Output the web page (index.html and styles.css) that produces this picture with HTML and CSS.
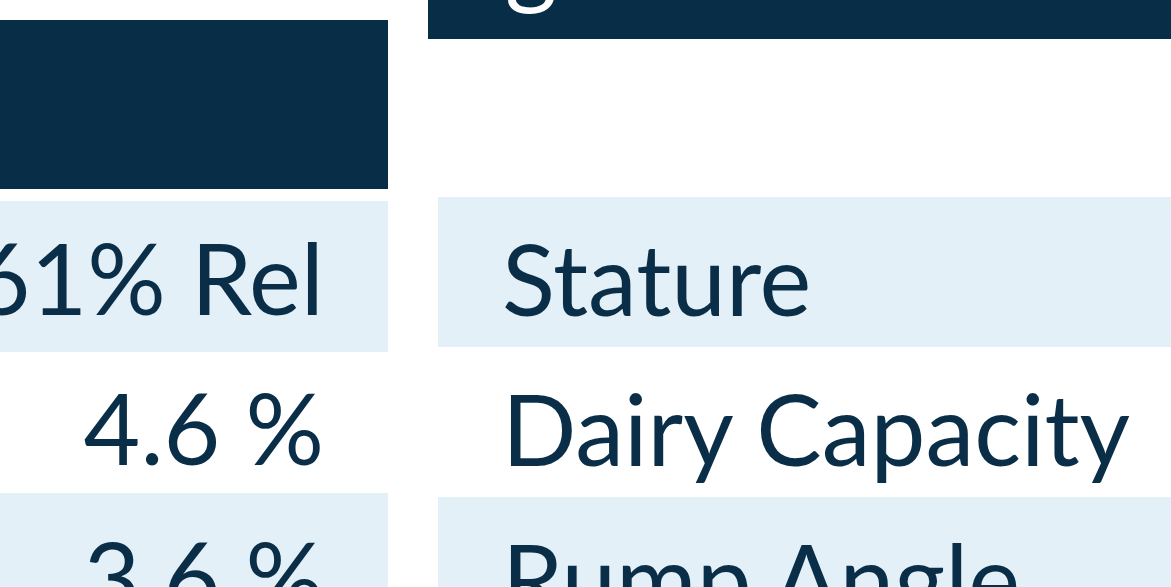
FILE: index.html
```html
<!DOCTYPE html>
<html lang="en">
<head>
<meta charset="utf-8">
<title>Traits</title>
<link rel="stylesheet" href="styles.css">
</head>
<body>
<div class="page">
  <section class="col col-left">
    <div class="head head-left"></div>
    <div class="row band r1"><span class="val">61% Rel</span></div>
    <div class="row r2"><span class="val">4.6 %</span></div>
    <div class="row band r3"><span class="val">3.6 %</span></div>
  </section>
  <section class="col col-right">
    <div class="head head-right"><span class="title">genomic</span></div>
    <div class="rows">
      <div class="row band t1"><span class="name">Stature</span></div>
      <div class="row t2"><span class="name">Dairy Capacity</span></div>
      <div class="row band t3"><span class="name">Rump Angle</span></div>
    </div>
  </section>
</div>
</body>
</html>
```

FILE: styles.css
```css
html, body {
  margin: 0;
  padding: 0;
  background: #ffffff;
}
body {
  width: 1171px;
  height: 587px;
  overflow: hidden;
  font-family: "Lato", "Noto Sans", sans-serif;
  color: #0a2e47;
}
.page {
  display: flex;
  gap: 40px;
  height: 587px;
  overflow: hidden;
}
.col {
  display: flex;
  flex-direction: column;
}
.col-left {
  width: 388px;
  flex: none;
  padding-top: 20px;
}
.col-right {
  flex: 1;
  min-width: 0;
}
.head {
  background: #082d46;
  flex: none;
}
.head-left {
  height: 169px;
  margin-bottom: 12px;
}
.head-right {
  height: 39px;
  overflow: hidden;
  margin-bottom: 158px;
  padding-left: 77px;
}
.title {
  display: block;
  color: #ffffff;
  font-size: 100px;
  line-height: 100px;
  margin-top: -93px;
}
.rows {
  display: flex;
  flex-direction: column;
  margin-left: 10px;
}
.row {
  display: flex;
  align-items: flex-start;
  flex: none;
  box-sizing: border-box;
  font-size: 98px;
  line-height: 1.2;
  white-space: nowrap;
  overflow: hidden;
}
.band {
  background: #e3f0f8;
}
.col-left .row {
  justify-content: flex-end;
  padding-right: 64px;
}
.r1 { height: 151px; padding-top: 18px; }
.r2 { height: 141px; padding-top: 17px; }
.r3 { height: 150px; padding-top: 25px; }
.col-right .row {
  padding-left: 64px;
  padding-top: 23px;
  height: 150px;
}
```
